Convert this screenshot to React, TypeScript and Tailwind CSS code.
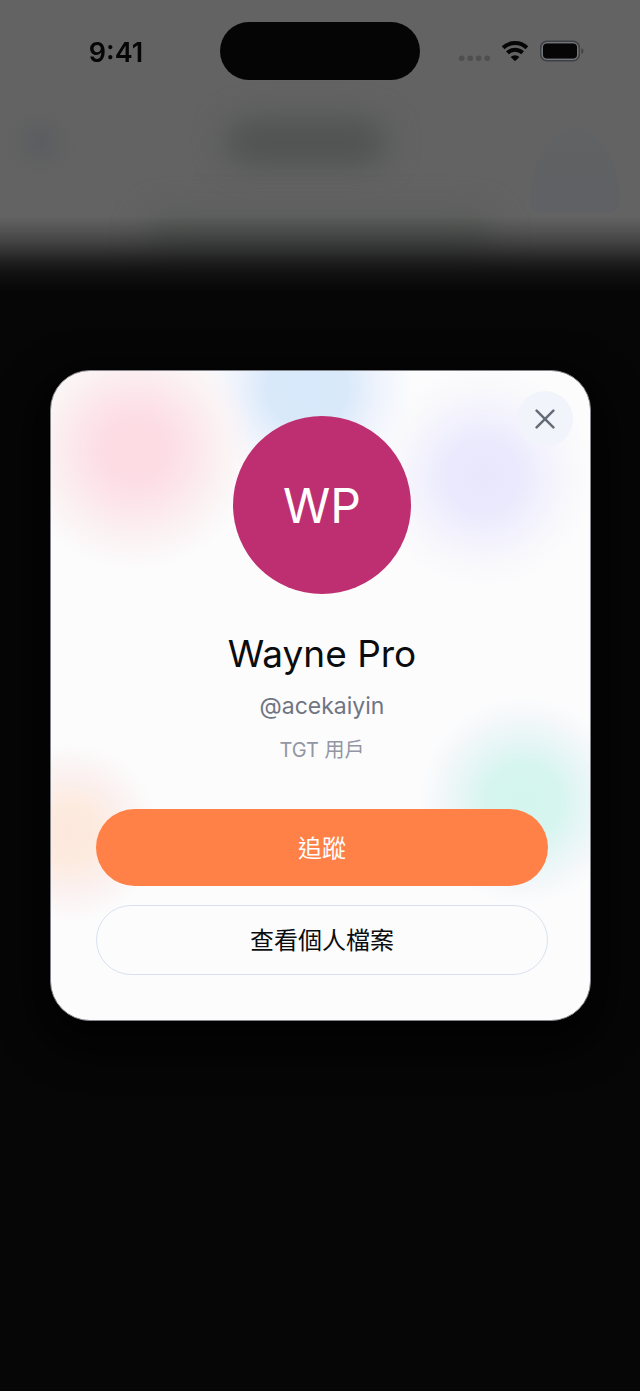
import { useState } from "react";

function StatusBar() {
    return (
        <div className="grid h-[102px] grid-cols-[1fr_200px_1fr] items-center text-[#060606]">
            <time className="pt-1 pl-3 text-center text-[27px] leading-8 font-semibold">9:41</time>
            <div className="h-[58px] rounded-full bg-[#050505]" />
            <div className="flex items-center justify-end gap-[11px] pr-14">
                <svg className="h-5 w-8" viewBox="0 0 32 20" fill="#4f4f4f" aria-hidden>
                    <circle cx="3.6" cy="17.2" r="2.8" />
                    <circle cx="12.2" cy="17.2" r="2.8" />
                    <circle cx="20.7" cy="17.2" r="2.8" />
                    <circle cx="29.2" cy="17.2" r="2.8" />
                </svg>
                <svg className="h-5 w-7" viewBox="0 0 28 20" aria-hidden>
                    <g fill="none" stroke="currentColor" strokeWidth="4">
                        <path d="M2.1 6.8a17.2 17.2 0 0 1 23.8 0" />
                        <path d="M6.4 11.8a10.9 10.9 0 0 1 15.2 0" />
                    </g>
                    <path d="M14 20.2l-4.4-4.2a6.2 6.2 0 0 1 8.8 0z" fill="currentColor" />
                </svg>
                <svg className="h-[22px] w-11" viewBox="0 0 44 22" aria-hidden>
                    <rect x="0.8" y="1.3" width="38.4" height="19.4" rx="6" fill="none" stroke="#3f4042" strokeWidth="1.6" />
                    <rect x="2.2" y="2.7" width="35.6" height="16.6" rx="5" fill="none" stroke="#767b87" strokeWidth="1" />
                    <rect x="3" y="3.6" width="34" height="15" rx="4" fill="currentColor" />
                    <path d="M41.4 8.2c2.6 1 2.6 4.6 0 5.6z" fill="#3f4042" />
                </svg>
            </div>
        </div>
    );
}

// The screen behind the dialog, blurred and dimmed
function Backdrop() {
    return (
        <header className="h-[300px] overflow-hidden bg-[#636363] mask-[linear-gradient(#000_72%,#000000dd_76%,#000000b0_80%,#00000078_84%,#0000004a_87%,#00000020_91%,transparent_98%)]">
            <StatusBar />
            <div className="grid grid-cols-[1fr_172px_1fr] items-start">
                <div className="h-20 w-20 rounded-full bg-[radial-gradient(closest-side,#5b5d61,#5f6061_40%,#61616180_70%,transparent)]" />
                <div className="mt-[18px] -ml-2 h-11 w-40 rounded-full bg-[#4e5250] blur-lg" />
                <div className="mt-[27px] mr-5 ml-auto h-[84px] w-[90px] rounded-[50%_50%_12px_12px/85%_85%_12px_12px] bg-linear-to-b from-[#616263] to-[#5f6165]" />
            </div>
            <div className="mx-auto h-12 w-[350px] rounded-full bg-[#575a58] blur-lg" />
        </header>
    );
}

const cardGlow =
    "bg-[radial-gradient(circle_at_84px_79px,#fddbe3,#fddde5_32px,#fce8ec_62px,#fbf2f3_88px,transparent_120px),radial-gradient(circle_at_256px_16px,#d7e9fb,#d9e9fa_40px,#edf2fc_68px,transparent_105px),radial-gradient(circle_at_432px_106px,#e8e7fc,#eae9fd_34px,#f3f2fd_64px,#f9f9fc_90px,transparent_112px),radial-gradient(circle_at_472px_430px,#d4f5ee,#d6f5ef_36px,#e8f6f6_64px,#f5f8fa_86px,transparent_104px),radial-gradient(circle_at_18px_462px,#fde8dc,#fdebe0_30px,#fbf1f0_58px,transparent_90px)]";

export default function App() {
    const [open, setOpen] = useState(true);
    const [following, setFollowing] = useState(false);

    return (
        <div className="relative min-h-screen bg-[#060606] font-['Inter','Noto_Sans_CJK_TC',sans-serif]">
            <Backdrop />

            {open && (
                <div className="absolute inset-0 flex items-center pr-[49px] pl-[50px]">
                    <section
                        role="dialog"
                        aria-labelledby="profile-name"
                        className={`relative flex w-full flex-col items-center rounded-[40px] border border-[#85868c] bg-[#fcfcfd] pt-[45px] pr-[42px] pb-[45px] pl-[45px] text-center shadow-[0_16px_40px_10px_#020202] ${cardGlow}`}
                    >
                        <button
                            type="button"
                            aria-label="關閉"
                            onClick={() => setOpen(false)}
                            className="absolute top-5 right-[17px] flex h-14 w-14 items-center justify-center rounded-full bg-[#f1f5fb]"
                        >
                            <svg className="h-5 w-5" viewBox="0 0 20 20" fill="none" stroke="#666b78" strokeWidth="2.5" strokeLinecap="round">
                                <path d="M1.6 1.6l16.8 16.8M18.4 1.6L1.6 18.4" />
                            </svg>
                        </button>

                        <div className="flex h-[178px] w-[178px] items-center justify-center rounded-full bg-[#be2f72] pt-[2px] text-[48px] text-white">
                            WP
                        </div>

                        <div className="flex flex-col gap-[14px] py-[38px]">
                            <h1 id="profile-name" className="text-[37px] leading-[44px] text-[#0b0c0e]">
                                Wayne Pro
                            </h1>
                            <p className="text-[23px] leading-8 text-[#6f7582]">@acekaiyin</p>
                            <p className="text-[20px] leading-7 text-[#9297a3]">TGT 用戶</p>
                        </div>

                        <div className="flex w-full flex-col gap-[19px] pt-[7px] text-[24px]">
                            <button
                                type="button"
                                aria-pressed={following}
                                onClick={() => setFollowing(!following)}
                                className="h-[77px] rounded-full bg-[#ff8147] pt-[2px] text-white"
                            >
                                追蹤
                            </button>
                            <button type="button" className="h-[70px] rounded-full border border-[#d8e1ef] bg-[#fcfcfd] pt-[2px] text-[#0b0c0e]">
                                查看個人檔案
                            </button>
                        </div>
                    </section>
                </div>
            )}
        </div>
    );
}
